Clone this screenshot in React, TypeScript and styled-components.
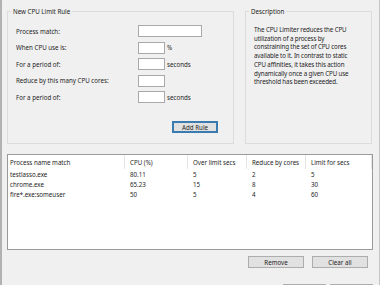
import React from "react";
import styled, { createGlobalStyle } from "styled-components";

const Global = createGlobalStyle`
  html, body { margin: 0; padding: 0; background: #f0f0f0; }
  body { font-family: "Noto Sans", "Open Sans", sans-serif; }
  * { box-sizing: border-box; }
`;

const Window = styled.div`
  width: 380px;
  height: 285px;
  overflow: hidden;
  background: #f0f0f0;
  border-left: 2px solid #b2b2b2;
  border-right: 1px solid #c4c4c4;
  display: flex;
  flex-direction: column;
  font-size: 6.2px;
  color: #1e1e1e;
  padding: 7px 0 0 5px;
  & > * { flex-shrink: 0; }
`;

const TopRow = styled.div`
  display: flex;
  gap: 11px;
  height: 137px;
`;

const Group = styled.fieldset<{ $w: number }>`
  margin: 0;
  width: ${(p) => p.$w}px;
  height: 137px;
  border: 1px solid #dcdcdc;
  padding: 0;
  min-width: 0;
  display: flex;
  flex-direction: column;
`;

const Legend = styled.legend`
  margin-left: 3px;
  padding: 0 2px;
  font-size: 6.2px;
  line-height: 9px;
  color: #222;
`;

const FormGrid = styled.div`
  display: grid;
  grid-template-columns: 122px 27px auto;
  justify-content: start;
  grid-auto-rows: 12px;
  row-gap: 4.5px;
  align-items: center;
  padding: 9px 0 0 8px;
`;

const Label = styled.span`
  white-space: nowrap;
`;

const Input = styled.div<{ $w: number; $span?: boolean }>`
  width: ${(p) => p.$w}px;
  height: 12px;
  background: #fff;
  border: 1px solid #a9a9a9;
  grid-column: ${(p) => (p.$span ? "span 2" : "auto")};
`;

const Unit = styled.span`
  padding-left: 2px;
  white-space: nowrap;
`;

const AddRow = styled.div`
  display: flex;
  justify-content: flex-end;
  padding: 18px 15px 0 0;
`;

const Button = styled.div<{ $w: number; $default?: boolean }>`
  width: ${(p) => p.$w}px;
  height: 12px;
  display: flex;
  align-items: center;
  justify-content: center;
  background: #e1e1e1;
  border: ${(p) => (p.$default ? "2px solid #3b7bb0" : "1px solid #adadad")};
  white-space: nowrap;
  color: #1e1e1e;
`;

const DescText = styled.div`
  padding: 10px 0 0 8px;
  line-height: 8.7px;
  font-size: 6.2px;
  letter-spacing: -0.12px;
  white-space: nowrap;
`;

const List = styled.div`
  margin-top: 10px;
  width: 366px;
  height: 96px;
  background: #fff;
  border: 1px solid #9a9a9a;
  display: grid;
  grid-template-columns: 117px 63px 59px 59px 1fr;
  grid-template-rows: 14px repeat(3, 10px) 1fr;
`;

const Head = styled.div<{ $first?: boolean }>`
  display: flex;
  align-items: center;
  padding-left: ${(p) => (p.$first ? 2 : 5)}px;
  border-right: 1px solid #e5e5e5;
  white-space: nowrap;
`;

const Cell = styled.div<{ $first?: boolean }>`
  display: flex;
  align-items: center;
  padding-left: ${(p) => (p.$first ? 2 : 5)}px;
  white-space: nowrap;
`;

const ButtonRow = styled.div<{ $top: number; $gap: number; $right: number }>`
  display: flex;
  justify-content: flex-end;
  gap: ${(p) => p.$gap}px;
  margin-top: ${(p) => p.$top}px;
  padding-right: ${(p) => p.$right}px;
`;

const rows = [
  ["testlasso.exe", "80.11", "5", "2", "5"],
  ["chrome.exe", "65.23", "15", "8", "30"],
  ["fire*.exe:someuser", "50", "5", "4", "60"],
];

const heads = ["Process name match", "CPU (%)", "Over limit secs", "Reduce by cores", "Limit for secs"];

export default function App() {
  return (
    <>
      <Global />
      <Window>
        <TopRow>
          <Group $w={227}>
            <Legend>New CPU Limit Rule</Legend>
            <FormGrid>
              <Label>Process match:</Label>
              <Input $w={64} $span />
              <Label>When CPU use is:</Label>
              <Input $w={27} />
              <Unit>%</Unit>
              <Label>For a period of:</Label>
              <Input $w={27} />
              <Unit>seconds</Unit>
              <Label>Reduce by this many CPU cores:</Label>
              <Input $w={27} />
              <span />
              <Label>For a period of:</Label>
              <Input $w={27} />
              <Unit>seconds</Unit>
            </FormGrid>
            <AddRow>
              <Button $w={46} $default>Add Rule</Button>
            </AddRow>
          </Group>
          <Group $w={127}>
            <Legend>Description</Legend>
            <DescText>
              The CPU Limiter reduces the CPU<br />
              utilization of a process by<br />
              constraining the set of CPU cores<br />
              available to it. In contrast to static<br />
              CPU affinities, it takes this action<br />
              dynamically once a given CPU use<br />
              threshold has been exceeded.
            </DescText>
          </Group>
        </TopRow>
        <List>
          {heads.map((h, i) => (
            <Head key={h} $first={i === 0}>{h}</Head>
          ))}
          {rows.map((r) =>
            r.map((c, i) => (
              <Cell key={r[0] + i} $first={i === 0}>{c}</Cell>
            ))
          )}
        </List>
        <ButtonRow $top={6} $gap={8} $right={11}>
          <Button $w={56}>Remove</Button>
          <Button $w={56}>Clear all</Button>
        </ButtonRow>
        <ButtonRow $top={16} $gap={4} $right={6}>
          <Button $w={43} aria-label="OK" />
          <Button $w={43} aria-label="Cancel" />
        </ButtonRow>
      </Window>
    </>
  );
}
